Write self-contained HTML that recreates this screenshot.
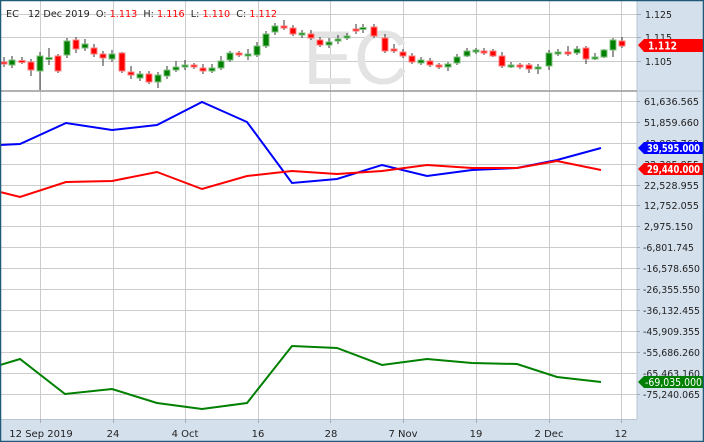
<!DOCTYPE html>
<html><head><meta charset="utf-8"><style>
html,body{margin:0;padding:0;background:#fff;}
svg{display:block;font-family:"DejaVu Sans","Liberation Sans",sans-serif;}
</style></head><body>
<svg width="704" height="442" viewBox="0 0 704 442" xmlns="http://www.w3.org/2000/svg">
<rect x="0" y="0" width="704" height="442" fill="#fff"/>
<rect x="637" y="0" width="67" height="442" fill="#d5e0ed"/>
<rect x="0" y="419" width="704" height="23" fill="#d5e0ed"/>
<line x1="637" y1="0" x2="637" y2="419" stroke="#b8c4d2"/>
<line x1="0" y1="419.5" x2="637" y2="419.5" stroke="#b8c4d2"/>
<g stroke="#cccccc" stroke-width="1">
<line x1="40.5" y1="0" x2="40.5" y2="419"/><line x1="113.5" y1="0" x2="113.5" y2="419"/>
<line x1="185.5" y1="0" x2="185.5" y2="419"/><line x1="258.5" y1="0" x2="258.5" y2="419"/>
<line x1="330.5" y1="0" x2="330.5" y2="419"/><line x1="403.5" y1="0" x2="403.5" y2="419"/>
<line x1="476.5" y1="0" x2="476.5" y2="419"/><line x1="549.5" y1="0" x2="549.5" y2="419"/>
<line x1="621.5" y1="0" x2="621.5" y2="419"/>
<line x1="0" y1="14.5" x2="637" y2="14.5"/><line x1="0" y1="37.5" x2="637" y2="37.5"/><line x1="0" y1="61.5" x2="637" y2="61.5"/>
<line x1="0" y1="101.5" x2="637" y2="101.5"/><line x1="0" y1="122.5" x2="637" y2="122.5"/><line x1="0" y1="143.5" x2="637" y2="143.5"/>
<line x1="0" y1="164.5" x2="637" y2="164.5"/><line x1="0" y1="185.5" x2="637" y2="185.5"/><line x1="0" y1="205.5" x2="637" y2="205.5"/>
<line x1="0" y1="226.5" x2="637" y2="226.5"/><line x1="0" y1="247.5" x2="637" y2="247.5"/><line x1="0" y1="268.5" x2="637" y2="268.5"/>
<line x1="0" y1="289.5" x2="637" y2="289.5"/><line x1="0" y1="310.5" x2="637" y2="310.5"/><line x1="0" y1="331.5" x2="637" y2="331.5"/>
<line x1="0" y1="352.5" x2="637" y2="352.5"/><line x1="0" y1="373.5" x2="637" y2="373.5"/><line x1="0" y1="394.5" x2="637" y2="394.5"/>
</g>
<line x1="0" y1="91" x2="637" y2="91" stroke="#999" stroke-width="1.5"/>
<line x1="637" y1="91" x2="704" y2="91" stroke="#b8c4d2"/>
<text x="303" y="84" font-size="76" fill="#e3e3e3" font-family="Liberation Sans,sans-serif">EC</text>
<text x="6" y="17" font-size="10" fill="#222" textLength="271" lengthAdjust="spacingAndGlyphs">EC&#160;&#160;&#160;12 Dec 2019&#160;&#160;O:&#160;<tspan fill="#f00">1.113</tspan>&#160;&#160;H:&#160;<tspan fill="#f00">1.116</tspan>&#160;&#160;L:&#160;<tspan fill="#f00">1.110</tspan>&#160;&#160;C:&#160;<tspan fill="#f00">1.112</tspan></text>
<g stroke="#333" stroke-width="1">
<line x1="4" y1="57" x2="4" y2="67"/><line x1="12" y1="56" x2="12" y2="68"/><line x1="22" y1="57" x2="22" y2="64"/><line x1="31" y1="59" x2="31" y2="76"/>
<line x1="40" y1="52" x2="40" y2="90"/><line x1="49" y1="48" x2="49" y2="65"/><line x1="58" y1="54" x2="58" y2="73"/><line x1="67" y1="38" x2="67" y2="58"/>
<line x1="76" y1="37" x2="76" y2="53"/><line x1="85" y1="39" x2="85" y2="51"/><line x1="94" y1="44" x2="94" y2="57"/><line x1="103" y1="51" x2="103" y2="66"/>
<line x1="112" y1="50" x2="112" y2="62"/><line x1="122" y1="52" x2="122" y2="73"/><line x1="131" y1="66" x2="131" y2="79"/><line x1="140" y1="71" x2="140" y2="81"/>
<line x1="149" y1="71" x2="149" y2="84"/><line x1="158" y1="72" x2="158" y2="88"/><line x1="167" y1="66" x2="167" y2="79"/><line x1="176" y1="61" x2="176" y2="72"/>
<line x1="185" y1="60" x2="185" y2="70"/><line x1="194" y1="63" x2="194" y2="69"/><line x1="203" y1="64" x2="203" y2="74"/><line x1="212" y1="64" x2="212" y2="73"/>
<line x1="221" y1="56" x2="221" y2="70"/><line x1="230" y1="51" x2="230" y2="62"/><line x1="239" y1="51" x2="239" y2="57"/><line x1="248" y1="49" x2="248" y2="60"/>
<line x1="257" y1="42" x2="257" y2="57"/><line x1="266" y1="31" x2="266" y2="48"/><line x1="275" y1="23" x2="275" y2="35"/><line x1="284" y1="20" x2="284" y2="30"/>
<line x1="293" y1="25" x2="293" y2="36"/><line x1="302" y1="30" x2="302" y2="38"/><line x1="311" y1="30" x2="311" y2="40"/><line x1="320" y1="37" x2="320" y2="47"/>
<line x1="329" y1="38" x2="329" y2="48"/><line x1="338" y1="35" x2="338" y2="44"/><line x1="347" y1="33" x2="347" y2="40"/><line x1="356" y1="24" x2="356" y2="34"/>
<line x1="363" y1="24" x2="363" y2="33"/><line x1="374" y1="24" x2="374" y2="38"/><line x1="385" y1="34" x2="385" y2="53"/><line x1="394" y1="44" x2="394" y2="53"/>
<line x1="403" y1="49" x2="403" y2="58"/><line x1="412" y1="53" x2="412" y2="64"/><line x1="421" y1="57" x2="421" y2="65"/><line x1="430" y1="58" x2="430" y2="67"/>
<line x1="439" y1="63" x2="439" y2="69"/><line x1="448" y1="62" x2="448" y2="71"/><line x1="457" y1="54" x2="457" y2="65"/><line x1="467" y1="48" x2="467" y2="57"/>
<line x1="476" y1="48" x2="476" y2="54"/><line x1="484" y1="48" x2="484" y2="55"/><line x1="493" y1="49" x2="493" y2="57"/><line x1="502" y1="52" x2="502" y2="68"/>
<line x1="511" y1="62" x2="511" y2="68"/><line x1="520" y1="63" x2="520" y2="69"/><line x1="529" y1="63" x2="529" y2="73"/><line x1="538" y1="64" x2="538" y2="74"/>
<line x1="549" y1="50" x2="549" y2="70"/><line x1="558" y1="49" x2="558" y2="56"/><line x1="568" y1="46" x2="568" y2="56"/><line x1="577" y1="46" x2="577" y2="55"/>
<line x1="586" y1="46" x2="586" y2="64"/><line x1="595" y1="53" x2="595" y2="60"/><line x1="604" y1="49" x2="604" y2="58"/><line x1="613" y1="38" x2="613" y2="57"/>
<line x1="622" y1="37" x2="622" y2="48"/>
</g>
<g stroke-width="1">
<g fill="#ff0000" stroke="#ff8080">
<rect x="1" y="62" width="6" height="2"/><rect x="19" y="60.5" width="6" height="2"/><rect x="28" y="62" width="6" height="8"/><rect x="55" y="56" width="6" height="15"/>
<rect x="73" y="40" width="6" height="9"/><rect x="91" y="48" width="6" height="6"/><rect x="100" y="54" width="6" height="4"/><rect x="119" y="53" width="6" height="18"/>
<rect x="128" y="72" width="6" height="3"/><rect x="146" y="74" width="6" height="8"/><rect x="191" y="65" width="6" height="2"/><rect x="200" y="68" width="6" height="3"/>
<rect x="236" y="53" width="6" height="2"/><rect x="281" y="26" width="6" height="2"/><rect x="290" y="28" width="6" height="6"/><rect x="308" y="34" width="6" height="4"/>
<rect x="317" y="40" width="6" height="5"/><rect x="353" y="29" width="6" height="2"/><rect x="371" y="27" width="6" height="9"/><rect x="382" y="38" width="6" height="13"/>
<rect x="391" y="49" width="6" height="2"/><rect x="400" y="52" width="6" height="4"/><rect x="409" y="56" width="6" height="6"/><rect x="427" y="61" width="6" height="4"/>
<rect x="436" y="65" width="6" height="2"/><rect x="481" y="51" width="6" height="2"/><rect x="490" y="51" width="6" height="5"/><rect x="499" y="56" width="6" height="10"/>
<rect x="517" y="65" width="6" height="2"/><rect x="526" y="65" width="6" height="4"/><rect x="565" y="52" width="6" height="2"/><rect x="583" y="48" width="6" height="11"/>
<rect x="619" y="41" width="6" height="5"/>
</g>
<g fill="#008000" stroke="#80c080">
<rect x="9" y="60" width="6" height="5"/><rect x="37" y="56" width="6" height="15"/><rect x="46" y="57.5" width="6" height="2"/><rect x="64" y="41" width="6" height="14"/>
<rect x="82" y="44" width="6" height="4"/><rect x="109" y="54" width="6" height="5"/><rect x="137" y="74" width="6" height="4"/><rect x="155" y="75" width="6" height="7"/>
<rect x="164" y="70" width="6" height="6"/><rect x="173" y="67" width="6" height="3"/><rect x="182" y="65" width="6" height="2"/><rect x="209" y="68" width="6" height="3"/>
<rect x="218" y="61" width="6" height="7"/><rect x="227" y="53" width="6" height="7"/><rect x="245" y="54" width="6" height="2"/><rect x="254" y="46" width="6" height="9"/>
<rect x="263" y="34" width="6" height="12"/><rect x="272" y="26" width="6" height="6"/><rect x="299" y="33" width="6" height="2"/><rect x="326" y="42" width="6" height="3"/>
<rect x="335" y="39" width="6" height="2"/><rect x="344" y="36" width="6" height="2"/><rect x="360" y="27.5" width="6" height="2"/><rect x="418" y="60" width="6" height="3"/>
<rect x="445" y="64" width="6" height="3"/><rect x="454" y="57" width="6" height="6"/><rect x="464" y="51" width="6" height="5"/><rect x="473" y="50" width="6" height="2"/>
<rect x="508" y="65" width="6" height="2"/><rect x="535" y="67" width="6" height="2"/><rect x="546" y="53" width="6" height="13"/><rect x="555" y="52" width="6" height="2"/>
<rect x="574" y="49" width="6" height="4"/><rect x="592" y="57" width="6" height="2"/><rect x="601" y="50" width="6" height="7"/><rect x="610" y="40" width="6" height="10"/>
</g>
</g>
<polyline fill="none" stroke="#0000ff" stroke-width="2" points="0,145 20,144 66,123 112,130 157,125 202,102 247,122 292,183 337,179 382,165 427,176 472,170 517,168 557,160 601,148"/>
<polyline fill="none" stroke="#ff0000" stroke-width="2" points="0,192 20,197 66,182 112,181 157,172 202,189 247,176 292,171 337,174 382,171 427,165 472,168 517,168 557,161 601,170"/>
<polyline fill="none" stroke="#008000" stroke-width="2" points="0,365 20,359 65,394 112,389 157,403 202,409 247,403 292,346 337,348 382,365 427,359 472,363 517,364 557,377 601,382"/>
<g stroke="#aab" stroke-width="1">
<line x1="637" y1="14.5" x2="641" y2="14.5"/><line x1="637" y1="37.5" x2="641" y2="37.5"/><line x1="637" y1="61.5" x2="641" y2="61.5"/>
<line x1="637" y1="101.5" x2="640" y2="101.5"/><line x1="637" y1="122.5" x2="640" y2="122.5"/><line x1="637" y1="185.5" x2="640" y2="185.5"/><line x1="637" y1="205.5" x2="640" y2="205.5"/><line x1="637" y1="226.5" x2="640" y2="226.5"/><line x1="637" y1="247.5" x2="640" y2="247.5"/><line x1="637" y1="268.5" x2="640" y2="268.5"/><line x1="637" y1="289.5" x2="640" y2="289.5"/><line x1="637" y1="310.5" x2="640" y2="310.5"/><line x1="637" y1="331.5" x2="640" y2="331.5"/><line x1="637" y1="352.5" x2="640" y2="352.5"/><line x1="637" y1="394.5" x2="640" y2="394.5"/>
</g>
<g font-size="10" fill="#222" lengthAdjust="spacingAndGlyphs">
<text x="645" y="18" textLength="27" lengthAdjust="spacingAndGlyphs">1.125</text><text x="645" y="41" textLength="27" lengthAdjust="spacingAndGlyphs">1.115</text><text x="645" y="65" textLength="27" lengthAdjust="spacingAndGlyphs">1.105</text>
<text x="644" y="105" textLength="55" lengthAdjust="spacingAndGlyphs">61,636.565</text><text x="644" y="126" textLength="55" lengthAdjust="spacingAndGlyphs">51,859.660</text><text x="644" y="147" textLength="55" lengthAdjust="spacingAndGlyphs">42,082.760</text>
<text x="644" y="168" textLength="55" lengthAdjust="spacingAndGlyphs">32,305.855</text><text x="644" y="189" textLength="55" lengthAdjust="spacingAndGlyphs">22,528.955</text><text x="644" y="209" textLength="55" lengthAdjust="spacingAndGlyphs">12,752.055</text>
<text x="644" y="230" textLength="49" lengthAdjust="spacingAndGlyphs">2,975.150</text><text x="643" y="251" textLength="51" lengthAdjust="spacingAndGlyphs">-6,801.745</text><text x="643" y="272" textLength="57" lengthAdjust="spacingAndGlyphs">-16,578.650</text>
<text x="643" y="293" textLength="57" lengthAdjust="spacingAndGlyphs">-26,355.550</text><text x="643" y="314" textLength="57" lengthAdjust="spacingAndGlyphs">-36,132.455</text><text x="643" y="335" textLength="57" lengthAdjust="spacingAndGlyphs">-45,909.355</text>
<text x="643" y="356" textLength="57" lengthAdjust="spacingAndGlyphs">-55,686.260</text><text x="643" y="377" textLength="57" lengthAdjust="spacingAndGlyphs">-65,463.160</text><text x="643" y="398" textLength="57" lengthAdjust="spacingAndGlyphs">-75,240.065</text>
</g>
<polygon points="638,45 644,39 704,39 704,52 644,52" fill="#ff0000"/>
<text x="648" y="49.5" font-size="11" fill="#fff" font-weight="bold" textLength="29" lengthAdjust="spacingAndGlyphs">1.112</text>
<polygon points="638,148 644,142 704,142 704,154 644,154" fill="#0000ff"/>
<text x="647" y="152" font-size="10.5" fill="#fff" font-weight="bold" textLength="53" lengthAdjust="spacingAndGlyphs">39,595.000</text>
<polygon points="638,169 644,163 704,163 704,175 644,175" fill="#ff0000"/>
<text x="647" y="173" font-size="10.5" fill="#fff" font-weight="bold" textLength="53" lengthAdjust="spacingAndGlyphs">29,440.000</text>
<polygon points="638,382 644,376 704,376 704,388 644,388" fill="#008000"/>
<text x="645" y="386" font-size="10.5" fill="#fff" textLength="57" lengthAdjust="spacingAndGlyphs">-69,035.000</text>
<g stroke="#aab"><line x1="40.5" y1="419" x2="40.5" y2="423"/><line x1="113.5" y1="419" x2="113.5" y2="423"/><line x1="185.5" y1="419" x2="185.5" y2="423"/><line x1="258.5" y1="419" x2="258.5" y2="423"/><line x1="330.5" y1="419" x2="330.5" y2="423"/><line x1="403.5" y1="419" x2="403.5" y2="423"/><line x1="476.5" y1="419" x2="476.5" y2="423"/><line x1="549.5" y1="419" x2="549.5" y2="423"/><line x1="621.5" y1="419" x2="621.5" y2="423"/></g>
<g font-size="10" fill="#222" text-anchor="middle">
<text x="41" y="437">12 Sep 2019</text><text x="113" y="437">24</text><text x="185" y="437">4 Oct</text>
<text x="258" y="437">16</text><text x="331" y="437">28</text><text x="403" y="437">7 Nov</text>
<text x="476" y="437">19</text><text x="549" y="437">2 Dec</text><text x="621" y="437">12</text>
</g>
<rect x="0.5" y="0.5" width="703" height="441" fill="none" stroke="#1f5a78" stroke-width="1.5"/>
</svg>
</body></html>
